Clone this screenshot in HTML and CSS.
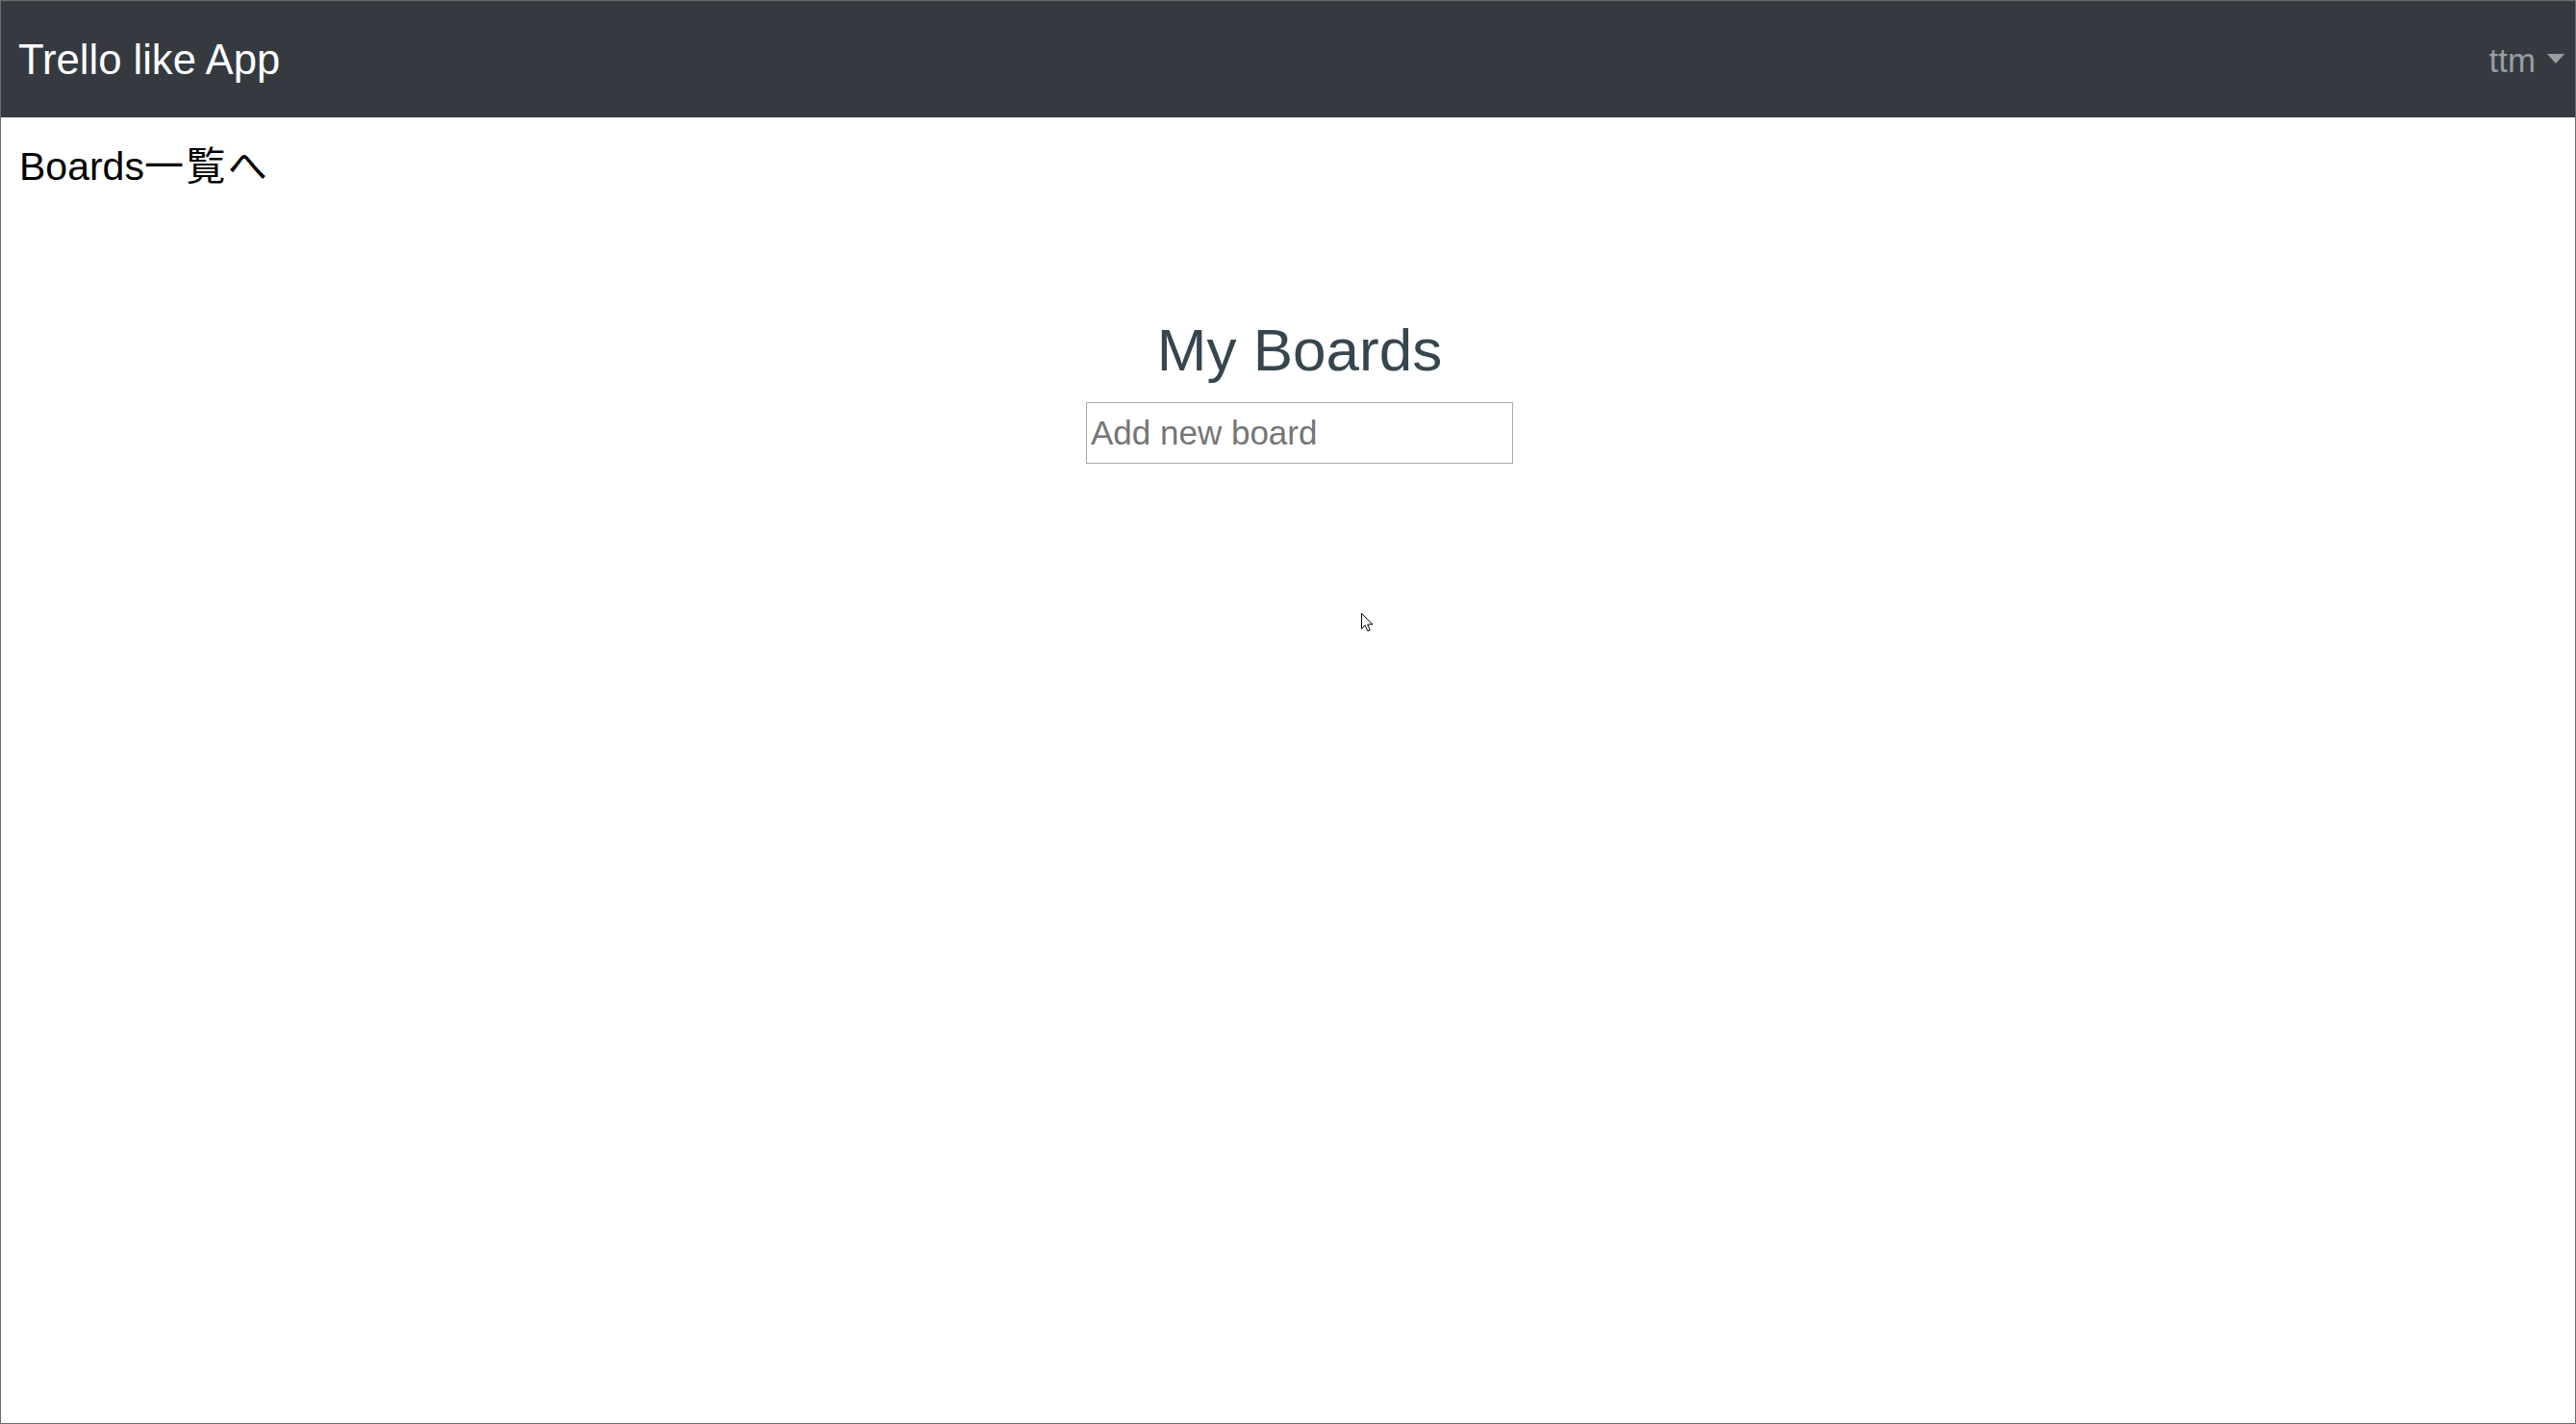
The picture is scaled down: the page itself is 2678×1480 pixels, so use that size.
FILE: index.html
```html
<!DOCTYPE html>
<html lang="ja">
<head>
<meta charset="utf-8">
<title>Trello like App</title>
<link rel="stylesheet" href="styles.css">
</head>
<body>
<div class="frame">
  <nav class="navbar">
    <a class="brand" href="#">Trello like App</a>
    <div class="user-menu">
      <span class="user-name">ttm</span><span class="caret"></span>
    </div>
  </nav>
  <div class="back-row">
    <a class="back-link" href="#">Boards<span class="jp">一覧へ</span></a>
  </div>
  <main class="boards">
    <h1 class="boards-title">My Boards</h1>
    <input class="new-board" type="text" placeholder="Add new board">
  </main>
  <svg class="cursor" width="13" height="20" viewBox="0 0 13 20" aria-hidden="true">
    <path d="M0.5 0.5 L0.5 16.5 L4.2 12.9 L6.8 18.8 L9.2 17.8 L6.7 12 L11.8 12 Z" fill="#fff" stroke="#000" stroke-width="1" stroke-linejoin="miter"/>
  </svg>
</div>
</body>
</html>
```

FILE: styles.css
```css
html, body {
  margin: 0;
  padding: 0;
  background: #ffffff;
}

.frame {
  position: relative;
  box-sizing: border-box;
  height: 1480px;
  border: 1px solid #6b6b6b;
  font-family: "Liberation Sans", Arial, "Noto Sans CJK JP", sans-serif;
  background: #ffffff;
}

.navbar {
  height: 121px;
  background: #343a40;
  display: flex;
  align-items: center;
  justify-content: space-between;
  padding: 0 10px 0 18px;
}

.brand {
  font-size: 43.6px;
  line-height: 1;
  color: #ffffff;
  text-decoration: none;
  margin-top: 3px;
}

.user-menu {
  display: flex;
  align-items: center;
  color: #9a9da0;
  margin-top: 3px;
}

.user-name {
  font-size: 34.9px;
  line-height: 1;
}

.caret {
  width: 0;
  height: 0;
  margin-left: 12px;
  margin-top: -5px;
  margin-right: 1px;
  border-top: 10px solid #9a9da0;
  border-left: 9px solid transparent;
  border-right: 9px solid transparent;
}

.back-row {
  margin-top: 27px;
  padding-left: 19px;
  line-height: 48px;
}

.back-link {
  font-size: 41px;
  color: #000000;
  text-decoration: none;
}

.jp {
  letter-spacing: 2.4px;
}

.boards {
  display: flex;
  flex-direction: column;
  align-items: center;
  padding-left: 24px;
  margin-top: 121px;
}

.boards-title {
  margin: 0;
  font-size: 62px;
  font-weight: normal;
  line-height: 74.4px;
  color: #35464f;
}

.new-board {
  margin-top: 17px;
  box-sizing: border-box;
  width: 444px;
  height: 64px;
  border: 1px solid #a9a9a9;
  border-radius: 0;
  padding: 0 4px;
  font-family: "Liberation Sans", Arial, sans-serif;
  font-size: 35px;
  color: #000;
  background: #fff;
  outline: none;
}

.new-board::placeholder {
  color: #757575;
}

.cursor {
  position: absolute;
  left: 1414px;
  top: 636px;
}
```
